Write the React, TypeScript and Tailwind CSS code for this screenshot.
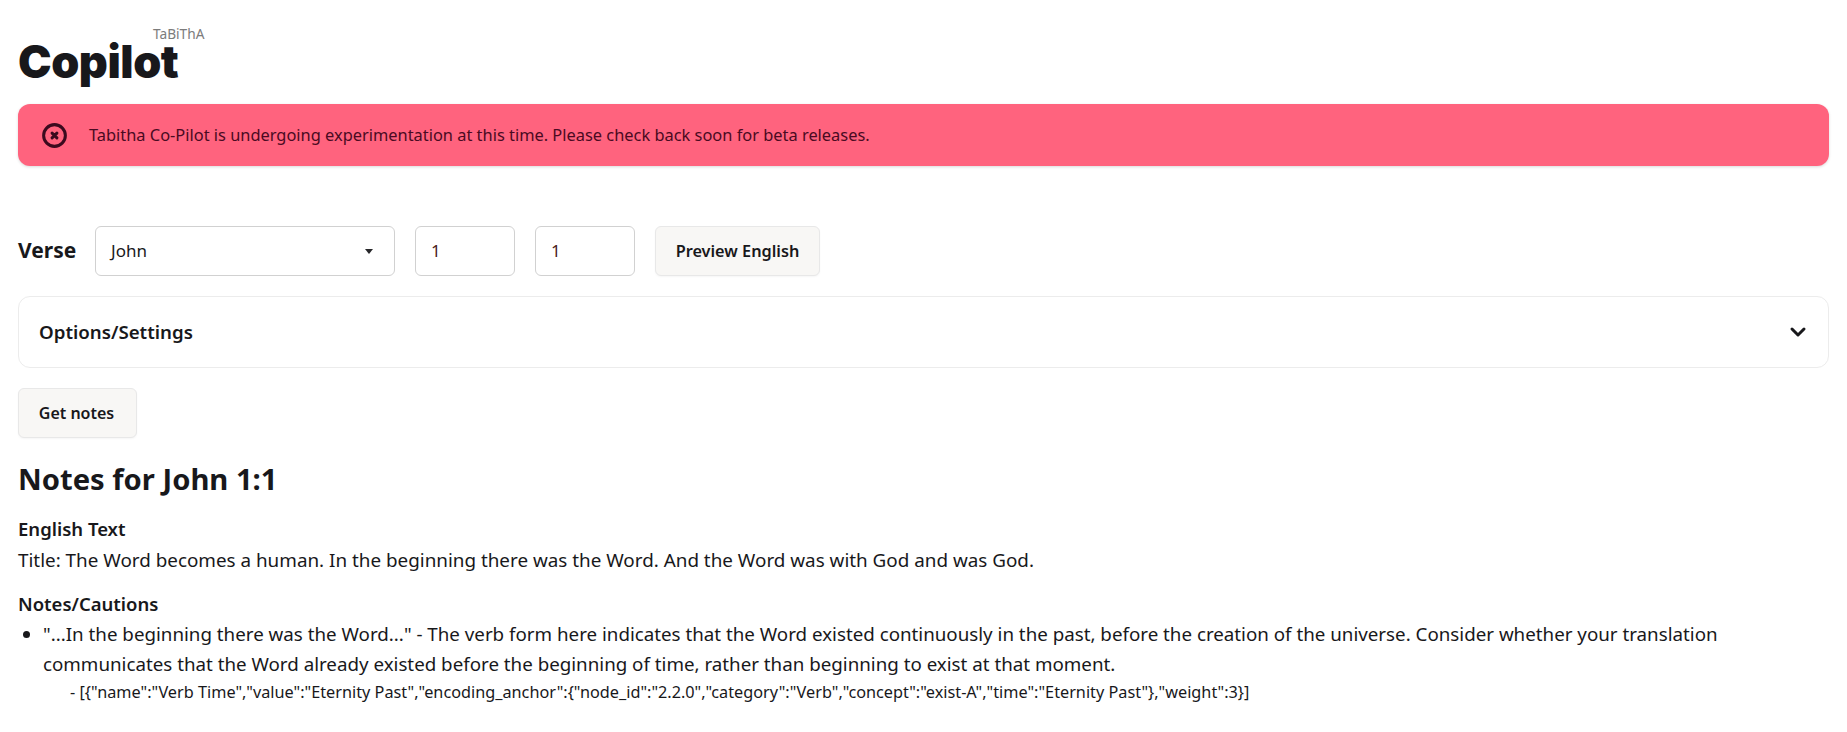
import { ChevronDown } from "lucide-react";

export default function App() {
  return (
    <div className="min-h-[732px] bg-white px-[18px] font-['Noto_Sans',sans-serif] text-[#18181b]">
      {/* Header */}
      <div className="h-[104px] pt-[26px]">
        <div className="ml-[135px] h-[16px] text-[13.7px] leading-[16px] text-[#7c7c7c]">TaBiThA</div>
        <h1 className="font-['Inter',sans-serif] text-[45px] leading-[40px] font-black tracking-[-0.01em]">Copilot</h1>
      </div>

      {/* Alert */}
      <div className="flex h-[62px] items-center gap-[20px] rounded-[12px] bg-[#ff637e] pl-[22px] text-[16.4px] text-[#4a0a22] shadow-[0_1px_3px_rgba(0,0,0,0.15)]">
        <svg className="h-[29px] w-[29px] shrink-0 text-[#3b0a1e]" fill="none" viewBox="0 0 24 24" stroke="currentColor">
          <path strokeLinecap="round" strokeLinejoin="round" strokeWidth="2.5" d="M10 14l2-2m0 0l2-2m-2 2l-2-2m2 2l2 2m7-2a9 9 0 11-18 0 9 9 0 0118 0z" />
        </svg>
        <span className="pt-px">Tabitha Co-Pilot is undergoing experimentation at this time. Please check back soon for beta releases.</span>
      </div>

      {/* Verse picker */}
      <div className="mt-[60px] flex items-center gap-5">
        <span className="w-[57px] text-[21px] font-bold">Verse</span>
        <div className="flex h-[50px] w-[300px] items-center justify-between rounded-[6px] border border-[#d1d1d1] pr-[21px] pl-[15px] text-[17px]">
          <span>John</span>
          <span className="h-0 w-0 border-x-[4.5px] border-t-[5px] border-x-transparent border-t-[#27272a]" />
        </div>
        <div className="flex h-[50px] w-[100px] items-center rounded-[6px] border border-[#d1d1d1] pl-[15px] text-[17px] text-[#4a1c22]">1</div>
        <div className="flex h-[50px] w-[100px] items-center rounded-[6px] border border-[#d1d1d1] pl-[15px] text-[17px] text-[#4a1c22]">1</div>
        <button className="h-[50px] w-[165px] rounded-[6px] border border-[#e8e8e8] bg-[#f8f7f5] text-[16.3px] font-semibold shadow-[0_1px_2px_rgba(0,0,0,0.04)]">Preview English</button>
      </div>

      {/* Options */}
      <div className="mt-5 flex h-[72px] items-center justify-between rounded-[12px] border border-[#ececec] pr-[18px] pl-[20px]">
        <span className="pt-px text-[18.7px] font-semibold">Options/Settings</span>
        <ChevronDown className="h-6 w-6" strokeWidth={3} />
      </div>

      <button className="mt-5 block h-[50px] w-[119px] rounded-[6px] border border-[#e8e8e8] bg-[#f8f7f5] pr-[2px] text-[16px] font-semibold shadow-[0_1px_2px_rgba(0,0,0,0.04)]">Get notes</button>

      {/* Notes */}
      <h2 className="mt-[21px] text-[29.2px] leading-[40px] font-bold">Notes for John 1:1</h2>
      <div className="mt-[15px] text-[18.85px] leading-[30px]">
        <div className="text-[18.5px] font-semibold">English Text</div>
        <p className="pt-px">Title: The Word becomes a human. In the beginning there was the Word. And the Word was with God and was God.</p>
        <div className="mt-[14px] text-[18.5px] font-semibold">Notes/Cautions</div>
        <ul className="list-disc pl-[25px] text-[18.75px]">
          <li>
            "...In the beginning there was the Word..." - The verb form here indicates that the Word existed continuously in the past, before the creation of the universe. Consider whether your translation communicates that the Word already existed before the beginning of time, rather than beginning to exist at that moment.
            <div className="pl-[27px] text-[16.25px] leading-[26px]">
              - [{'{'}"name":"Verb Time","value":"Eternity Past","encoding_anchor":{'{'}"node_id":"2.2.0","category":"Verb","concept":"exist-A","time":"Eternity Past"{'}'},"weight":3{'}'}]
            </div>
          </li>
        </ul>
      </div>
    </div>
  );
}
